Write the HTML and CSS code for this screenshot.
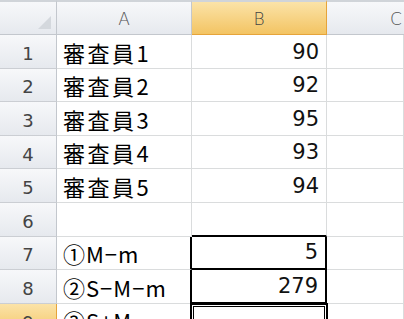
FILE: index.html
```html
<!DOCTYPE html>
<html lang="ja">
<head>
<meta charset="utf-8">
<link rel="stylesheet" href="styles.css">
</head>
<body>
<div class="sheet">
  <div class="hd corner"><span class="tri"></span></div>
  <div class="hd col">A</div>
  <div class="hd col sel">B</div>
  <div class="hd col last">C</div>

  <div class="hd row">1</div><div class="c txt">審査員1</div><div class="c num">90</div><div class="c"></div>
  <div class="hd row">2</div><div class="c txt">審査員2</div><div class="c num">92</div><div class="c"></div>
  <div class="hd row">3</div><div class="c txt">審査員3</div><div class="c num">95</div><div class="c"></div>
  <div class="hd row">4</div><div class="c txt">審査員4</div><div class="c num">93</div><div class="c"></div>
  <div class="hd row">5</div><div class="c txt">審査員5</div><div class="c num">94</div><div class="c"></div>
  <div class="hd row">6</div><div class="c txt"></div><div class="c num box-top"></div><div class="c"></div>
  <div class="hd row">7</div><div class="c txt sym box-left">①M−m</div><div class="c num box-mid">5</div><div class="c"></div>
  <div class="hd row">8</div><div class="c txt sym box-left">②S−M−m</div><div class="c num box-bot">279</div><div class="c"></div>
  <div class="hd row sel">9</div><div class="c txt sym">③S+M</div><div class="c num active"></div><div class="c"></div>
</div>
</body>
</html>
```
FILE: styles.css
```css
html, body {
  margin: 0;
  padding: 0;
  background: #fff;
  overflow: hidden;
}
.sheet {
  display: grid;
  grid-template-columns: 57px 135px 135px 1fr;
  grid-template-rows: 35px repeat(9, 33.6px);
  width: 404px;
  height: 319px;
  overflow: hidden;
  font-family: "Noto Sans CJK JP", "Noto Sans", sans-serif;
}
.hd {
  box-sizing: border-box;
  background: linear-gradient(#f7f8fa, #e6e9ee);
  border-right: 1px solid #c3c7cd;
  border-bottom: 1px solid #c3c7cd;
  color: #555;
  display: flex;
  align-items: center;
  justify-content: center;
}
.hd.col {
  border-top: 2px solid #d0d4d9;
  font-family: "DejaVu Sans", sans-serif;
  font-weight: 200;
  font-size: 17px;
  padding-top: 2px;
}
.hd.col.last {
  justify-content: flex-start;
  padding-left: 63px;
  border-right: none;
}
.hd.row {
  font-family: "DejaVu Sans", sans-serif;
  font-size: 18px;
  color: #444;
  padding-top: 4px;
  border-bottom-color: #cbced3;
}
.hd.corner {
  border-top: 2px solid #d0d4d9;
  position: relative;
}
.tri {
  position: absolute;
  right: 5px;
  bottom: 5px;
  width: 0;
  height: 0;
  border-left: 13px solid transparent;
  border-bottom: 13px solid #d4d8dd;
}
.hd.sel {
  background: linear-gradient(#fbe3a8, #f3c463);
  border-bottom-color: #e6a43a;
  border-right-color: #e6a43a;
  color: #444;
}
.c {
  box-sizing: border-box;
  border-right: 1px solid #dadcdd;
  border-bottom: 1px solid #dadcdd;
  display: flex;
  align-items: flex-end;
  padding-bottom: 1px;
  font-size: 22px;
  line-height: 30px;
  color: #000;
  white-space: nowrap;
  overflow: hidden;
}
.txt {
  padding-left: 6px;
  letter-spacing: 2.5px;
}
.txt.sym {
  letter-spacing: 1px;
}
.num {
  justify-content: flex-end;
  padding-right: 7px;
  font-family: "DejaVu Sans", sans-serif;
  font-size: 21px;
  color: #111;
}
.box-top { border-bottom: 2px solid #000; }
.box-left { border-right: 2px solid #000; }
.box-mid { border-right: 2px solid #000; border-bottom: 2px solid #000; }
.box-bot { border-right: 2px solid #000; border-bottom: 2px solid #000; }
.active {
  position: relative;
  overflow: visible;
}
.active::after {
  content: "";
  position: absolute;
  left: -2px;
  top: -1px;
  right: -2px;
  bottom: -3px;
  border: 2px solid #000;
  box-shadow: inset 0 0 0 1px #fff, inset 0 0 0 2px #000;
}
```
